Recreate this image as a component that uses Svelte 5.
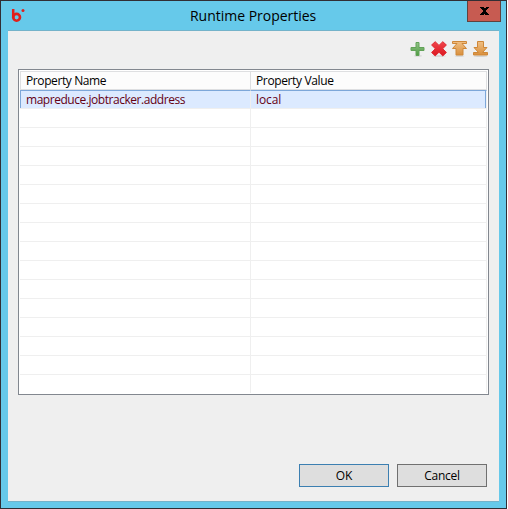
<script>
  const rows = [
    { name: 'mapreduce.jobtracker.address', value: 'local' },
    ...Array.from({ length: 14 }, () => ({ name: '', value: '' })),
    { name: '', value: '', last: true }
  ];
</script>

<div class="window">
  <header>
    <svg class="logo" width="16" height="16" viewBox="0 0 16 16">
      <path d="M2.2 0V9" fill="none" stroke="#e11f1b" stroke-width="2.5" />
      <circle cx="5.6" cy="8.3" r="3.4" fill="none" stroke="#e11f1b" stroke-width="2.6" />
      <circle cx="12" cy="1.5" r="1.5" fill="#e11f1b" />
    </svg>
    <h1>Runtime Properties</h1>
    <button class="close" aria-label="Close">
      <svg width="10" height="8" viewBox="0 0 10 8" shape-rendering="crispEdges">
        <path d="M0 0h4v1h2V0h3v1H8v1H7v1H6v2h1v1h1v1h1v1H5V7H4v1H0V7h1V6h1V5h1V3H2V2H1V1H0z" />
      </svg>
    </button>
  </header>

  <main>
    <div class="toolbar">
      <svg width="16" height="16" viewBox="0 0 16 16">
        <defs>
          <linearGradient id="green" x1="0" y1="0" x2="0" y2="1"><stop stop-color="#94c58a" /><stop offset="1" stop-color="#4c9a40" /></linearGradient>
          <linearGradient id="red" x1="0" y1="0" x2="0" y2="1"><stop stop-color="#f0444b" /><stop offset="1" stop-color="#dc1720" /></linearGradient>
          <linearGradient id="gold" x1="0" y1="0" x2="0" y2="1"><stop stop-color="#f0bf84" /><stop offset="1" stop-color="#d98f3c" /></linearGradient>
        </defs>
        <ellipse cx="8" cy="14.9" rx="4" ry=".8" fill="#000" opacity=".1" />
        <path d="M6 1.5h3v5h5v3H9v5H6v-5H1v-3h5z" fill="url(#green)" stroke="#62a258" stroke-linejoin="round" />
      </svg>
      <svg width="16" height="16" viewBox="0 0 16 16">
        <ellipse cx="8" cy="15" rx="7" ry=".8" fill="#000" opacity=".12" />
        <path d="M4.2 .7 8 4.4 11.8.7 15.4 4 11.7 7.7 15.4 11.5 11.8 14.9 8 11.2 4.2 14.9.6 11.5 4.3 7.7.6 4z" fill="url(#red)" stroke="#df2931" stroke-linejoin="round" />
      </svg>
      <svg width="16" height="16" viewBox="0 0 16 16">
        <ellipse cx="7.5" cy="15" rx="5" ry=".8" fill="#000" opacity=".12" />
        <path d="M.5 .5h14v2H10l4.5 5H11v6.5H4V7.5H.5L5 2.5H.5z" fill="url(#gold)" stroke="#ce8738" stroke-linejoin="round" />
      </svg>
      <svg width="16" height="16" viewBox="0 0 16 16">
        <ellipse cx="7.5" cy="15.2" rx="7" ry=".8" fill="#000" opacity=".12" />
        <path d="M4.5 .5h6v6h3.5l-4.5 5h5v2.5H.5v-2.5h5L1 6.5h3.5z" fill="url(#gold)" stroke="#ce8738" stroke-linejoin="round" />
      </svg>
    </div>

    <div class="table">
      <div class="head">
        <div class="cell"><span class="n1">Property Name</span></div>
        <div class="cell"><span class="n2">Property Value</span></div>
      </div>
      {#each rows as row, i}
        <div class="row" class:selected={i === 0} class:last={row.last}>
          <div class="cell"><span class="key">{row.name}</span></div>
          <div class="cell"><span class="val">{row.value}</span></div>
        </div>
      {/each}
    </div>

    <footer>
      <button class="ok"><span>OK</span></button>
      <button><span class="cancel">Cancel</span></button>
    </footer>
  </main>
</div>

<style>
  :global(body) { background: #fff; overflow: hidden; }
  .window {
    box-sizing: border-box;
    width: 507px;
    height: 509px;
    border: 1px solid #312e34;
    background: #66c9ea;
    font-family: "Open Sans", "Noto Sans", sans-serif;
    font-size: 12px;
    color: #000;
  }
  header { display: flex; height: 29px; }
  .logo { margin: 8px 0 0 10px; }
  h1 {
    flex: 1;
    margin: 0 0 0 13px;
    padding-left: 150px;
    font-size: 14px;
    font-weight: 400;
    line-height: 29px;
    letter-spacing: -0.02px;
    white-space: nowrap;
  }
  button {
    box-sizing: border-box;
    padding: 0;
    margin: 0;
    font: inherit;
    color: inherit;
    border-radius: 0;
  }
  .close {
    display: flex;
    justify-content: center;
    padding: 6px 0 0 1px;
    width: 34px;
    height: 21px;
    margin-right: 5px;
    background: #c75b51;
    border: 1px solid #60423f;
    border-top: 0;
  }
  main {
    display: flex;
    flex-direction: column;
    width: 491px;
    height: 470px;
    margin-left: 7px;
    background: #efefef;
    border-top: 1px solid #74b3ca;
    border-bottom: 1px solid #74b3ca;
  }
  .toolbar {
    display: flex;
    justify-content: flex-end;
    gap: 5px;
    height: 28px;
    padding: 10px 10px 0 0;
  }
  .table {
    box-sizing: border-box;
    width: 471px;
    height: 326px;
    margin-left: 10px;
    padding: 1px;
    background: #fff;
    border: 1px solid #82878f;
    line-height: 18px;
  }
  .head, .row { display: flex; box-sizing: border-box; width: 467px; height: 19px; }
  .head { border-top: 1px solid #dedfe1; }
  .head .cell { background: #fcfcfc; box-sizing: border-box; border-bottom: 1px solid #dedfe1; }
  .head .cell:first-child { border-left: 1px solid #dedfe1; padding-left: 5px; }
  .head .cell { border-right: 1px solid #dedfe1; }
  .row { border-bottom: 1px solid #efefef; }
  .cell { box-sizing: border-box; border-right: 1px solid #efefef; padding-left: 5px; white-space: nowrap; }
  .cell:first-child { width: 231px; padding-left: 6px; }
  .cell:last-child { width: 236px; }
  .selected { color: #650014; }
  .selected .cell { background: #dceaff; border-top: 1px solid #7da7d9; }
  .selected .cell:first-child { border-left: 1px solid #7da7d9; padding-left: 5px; }
  .selected .cell:last-child { box-shadow: inset -1px 0 #7da7d9; }
  .last { border-bottom: 0; height: 18px; }
  footer {
    display: flex;
    gap: 8px;
    margin: 69px 0 0 291px;
  }
  footer button {
    width: 90px;
    height: 23px;
    line-height: 20px;
    background: #dedede;
    border: 1px solid #707070;
  }
  footer .ok { border-color: #3c7fb1; }
  .key { letter-spacing: -0.46px; }
  .n1 { letter-spacing: -0.4px; }
  .n2 { letter-spacing: -0.37px; }
  .val { letter-spacing: -0.1px; }
  .cancel { letter-spacing: -0.25px; }
</style>
